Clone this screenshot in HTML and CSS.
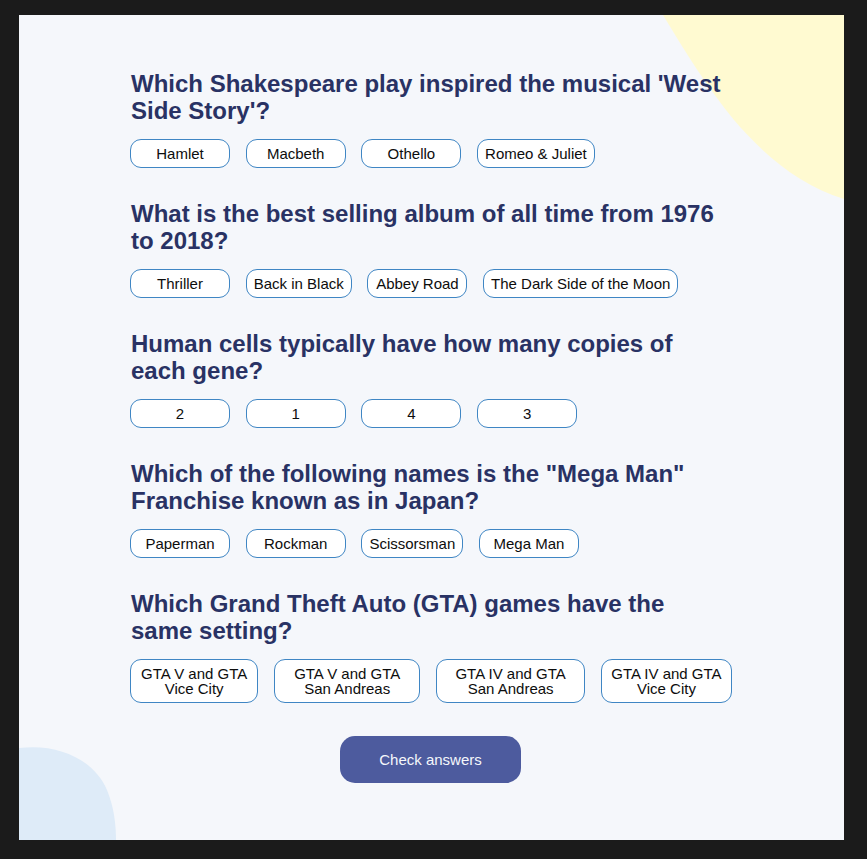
FILE: index.html
```html
<!DOCTYPE html>
<html lang="en">
<head>
<meta charset="utf-8">
<title>Quizzical</title>
<link rel="stylesheet" href="styles.css">
</head>
<body>
<div class="frame">
  <main class="panel">
    <svg class="blobs" viewBox="0 0 825 825" preserveAspectRatio="none" aria-hidden="true">
      <path class="blob-yellow" d="M644,0 C665,35 690,75 715,105 C745,140 780,170 825,184 L825,0 Z"/>
      <path class="blob-blue" d="M0,733 C40,728 75,745 88,775 C95,792 97,810 97,825 L0,825 Z"/>
    </svg>
    <div class="quiz">
      <section class="question">
        <h2 class="question-title">Which Shakespeare play inspired the musical 'West Side Story'?</h2>
        <div class="answers">
          <button class="answer">Hamlet</button>
          <button class="answer">Macbeth</button>
          <button class="answer">Othello</button>
          <button class="answer">Romeo &amp; Juliet</button>
        </div>
      </section>
      <section class="question">
        <h2 class="question-title">What is the best selling album of all time from 1976 to 2018?</h2>
        <div class="answers">
          <button class="answer">Thriller</button>
          <button class="answer">Back in Black</button>
          <button class="answer">Abbey Road</button>
          <button class="answer">The Dark Side of the Moon</button>
        </div>
      </section>
      <section class="question">
        <h2 class="question-title">Human cells typically have how many copies of each gene?</h2>
        <div class="answers">
          <button class="answer">2</button>
          <button class="answer">1</button>
          <button class="answer">4</button>
          <button class="answer">3</button>
        </div>
      </section>
      <section class="question">
        <h2 class="question-title">Which of the following names is the "Mega Man" Franchise known as in Japan?</h2>
        <div class="answers">
          <button class="answer">Paperman</button>
          <button class="answer">Rockman</button>
          <button class="answer">Scissorsman</button>
          <button class="answer">Mega Man</button>
        </div>
      </section>
      <section class="question">
        <h2 class="question-title">Which Grand Theft Auto (GTA) games have the same setting?</h2>
        <div class="answers">
          <button class="answer">GTA V and GTA Vice City</button>
          <button class="answer">GTA V and GTA San Andreas</button>
          <button class="answer">GTA IV and GTA San Andreas</button>
          <button class="answer">GTA IV and GTA Vice City</button>
        </div>
      </section>
      <button class="check">Check answers</button>
    </div>
  </main>
</div>
</body>
</html>
```

FILE: styles.css
```css
* { box-sizing: border-box; }

html, body {
  margin: 0;
  padding: 0;
  background: #1b1b1b;
}

body {
  font-family: "Liberation Sans", Arial, sans-serif;
}

.frame {
  padding: 15px 23px 19px 19px;
}

.panel {
  position: relative;
  height: 825px;
  overflow: hidden;
  background: #f5f7fb;
}

.blobs {
  position: absolute;
  inset: 0;
  width: 100%;
  height: 100%;
  z-index: 0;
}

.blob-yellow { fill: #fffad1; }
.blob-blue { fill: #deebf8; }

.quiz {
  position: relative;
  z-index: 1;
  width: 602px;
  margin: 0 0 0 111px;
  padding-top: 55px;
  display: flex;
  flex-direction: column;
}

.question {
  margin-bottom: 32px;
}

.question:last-of-type {
  margin-bottom: 33px;
}

.question-title {
  margin: 0 0 15px 1px;
  font-size: 24px;
  line-height: 27px;
  font-weight: 700;
  color: #293264;
}

.answers {
  display: flex;
  gap: 15.7px;
}

.answer {
  min-width: 100px;
  padding: 6px 7px;
  border: 1px solid #3f86c4;
  border-radius: 11px;
  background: #ffffff;
  color: #0d0d0d;
  font-family: "Liberation Sans", Arial, sans-serif;
  font-size: 15px;
  line-height: 15px;
  text-align: center;
}

.check {
  align-self: center;
  margin-left: -1px;
  padding: 16px 39px;
  border: none;
  border-radius: 15px;
  background: #4d5b9e;
  color: #f5f7fb;
  font-family: "Liberation Sans", Arial, sans-serif;
  font-size: 15px;
  line-height: 15px;
}
```
